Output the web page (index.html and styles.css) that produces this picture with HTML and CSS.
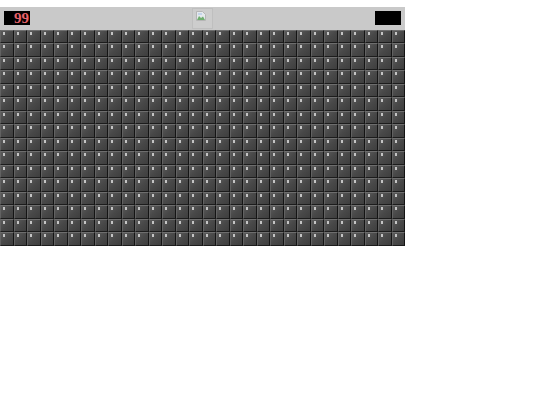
FILE: index.html
```html
<!DOCTYPE html>
<html lang="en">
<head>
    <meta charset="UTF-8">
    <meta name="viewport" content="width=device-width, initial-scale=1.0">
    <title>Minesweeper</title>
    <link rel="stylesheet" href="styles.css">
</head>
<body>
    <div class="game">
        <div class="status-bar">
            <div class="counter">99</div>
            <button class="face-button" aria-label="New game">
                <svg class="broken-image" width="10" height="10" viewBox="0 0 10 10">
                    <path d="M0.500 0.500H6.500L9.500 3.500V9.500H0.500Z" fill="#e4e8ec" stroke="#b5b5b5"/>
                    <path d="M1 9L3 5L5 7L7 5.500L9 9Z" fill="#6fae6f"/>
                    <path d="M2 2H6V4H2Z" fill="#c4d4ea"/>
                </svg>
            </button>
            <div class="counter"></div>
        </div>
        <div class="board" id="board"></div>
    </div>
    <script>
        // Fill the board with covered cells
        const board = document.getElementById('board');
        for (let i = 0; i < 30 * 16; i++) {
            const cell = document.createElement('div');
            cell.className = 'cell';
            board.appendChild(cell);
        }
    </script>
</body>
</html>
```

FILE: styles.css
```css
body {
    margin: 7px 0 0;
    background-color: #fff;
}
.game {
    width: 405px;
}
.status-bar {
    display: flex;
    justify-content: space-between;
    align-items: center;
    height: 22.500px;
    padding: 0 4px;
    background-color: #c9c9c9;
    box-sizing: border-box;
}
.counter {
    width: 26px;
    height: 14px;
    background-color: #000;
    color: #e8626a;
    font-family: "Liberation Serif", serif;
    font-size: 15px;
    font-weight: bold;
    line-height: 15px;
    text-align: right;
    padding-right: 1px;
    box-sizing: border-box;
}
.face-button {
    display: flex;
    align-items: flex-start;
    width: 21px;
    height: 21px;
    margin: 0;
    padding: 2px 3px;
    background-color: #cdcdcd;
    border: 1px solid #bfbfbf;
    box-sizing: border-box;
}
.broken-image {
    display: block;
}
.board {
    display: grid;
    grid-template-columns: repeat(30, 13.5px);
    grid-auto-rows: 13.5px;
}
.cell {
    position: relative;
    box-sizing: border-box;
    background: linear-gradient(135deg, #5a5a5a 0%, #484848 50%, #3e3e3e 100%);
    border-top: 1px solid #6e6e6e;
    border-left: 1px solid #626262;
    border-right: 1px solid #141414;
    border-bottom: 1px solid #1c1c1c;
}
.cell::before {
    content: "";
    position: absolute;
    left: 2px;
    top: 1px;
    width: 2px;
    height: 3px;
    background-color: #c4c4c4;
}
```
